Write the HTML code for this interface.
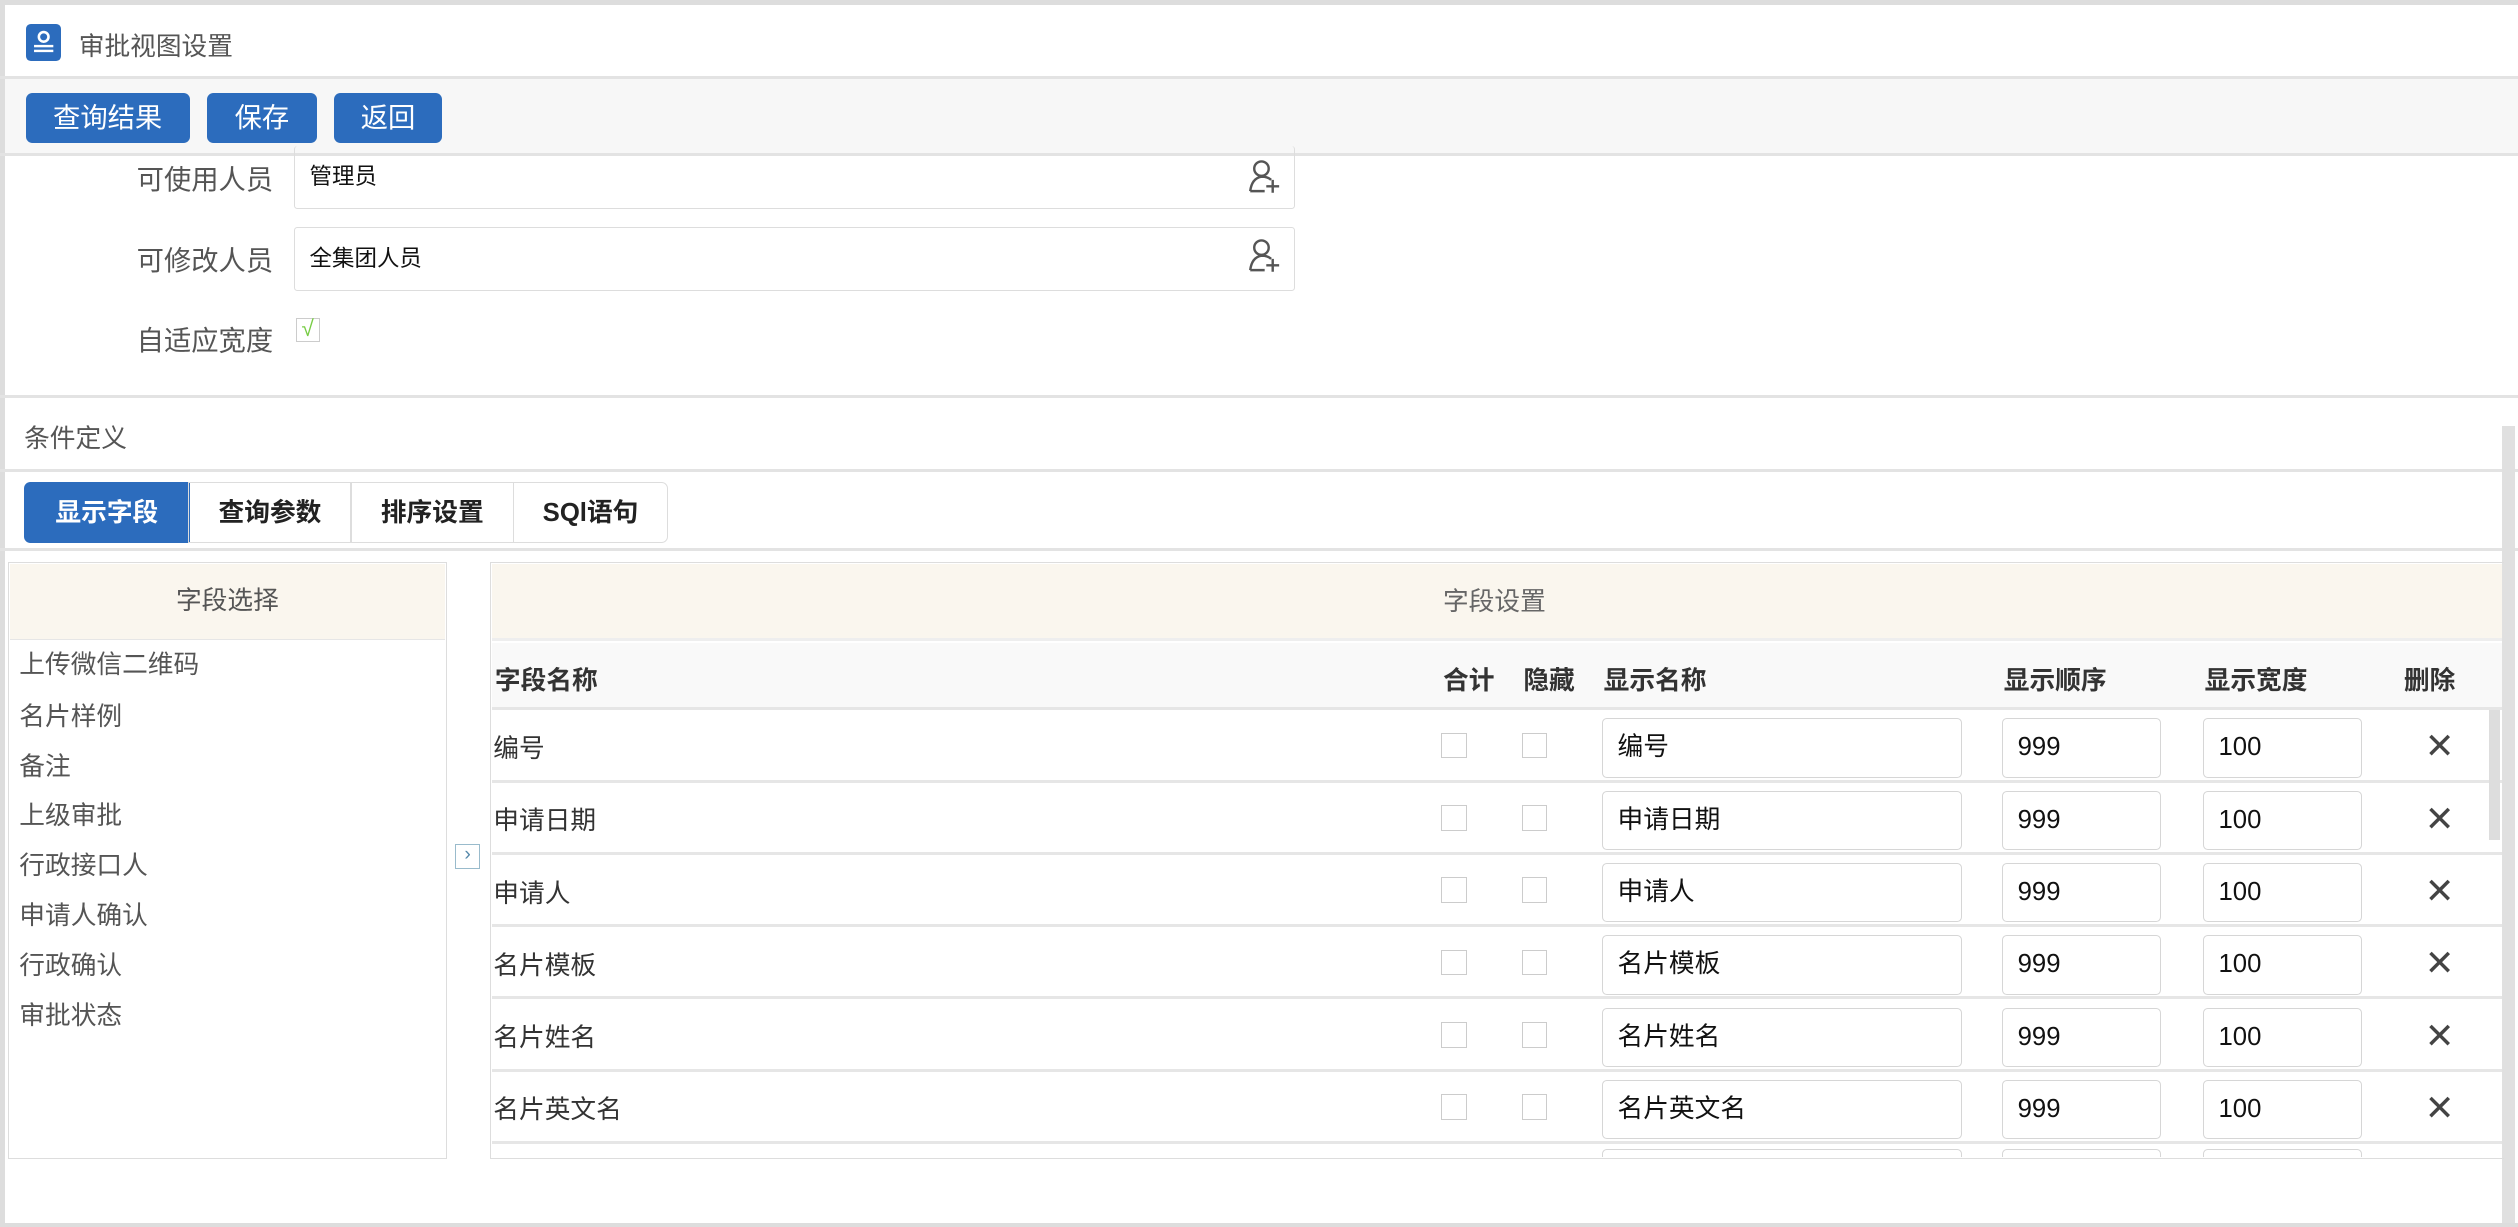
<!DOCTYPE html>
<html><head><meta charset="utf-8"><style>
*{box-sizing:border-box;margin:0;padding:0}
html,body{width:2518px;height:1227px;overflow:hidden;background:#fff}
#w{position:relative;width:1567px;height:764px;zoom:1.60689;font-family:"Liberation Sans","Noto Sans CJK SC",sans-serif;color:#333}
.a{position:absolute}
.hl{position:absolute;left:0;right:0;height:2px;background:#e3e3e3}
.btn{position:absolute;top:58px;height:31px;background:#2c6cbd;color:#fff;border-radius:4px;font-size:17px;line-height:31px;text-align:center}
.lbl{position:absolute;width:170px;text-align:right;font-size:17px;color:#555}
.inp{position:absolute;left:183px;width:623px;height:40px;border:1px solid #ddd;border-radius:2px;font-size:14px;color:#111;padding-left:9px;line-height:38px}
.tab{position:absolute;top:300px;height:38px;border:1px solid #ddd;font-size:16px;font-weight:bold;line-height:38px;text-align:center;color:#222}
.li{position:absolute;left:12px;font-size:16px;color:#555}
.th{position:absolute;top:411px;font-size:16px;font-weight:bold;color:#333}
.row{position:absolute;left:306px;width:1251px;height:45px;border-bottom:2px solid #e6e6e6}
.row .n{position:absolute;left:1px;top:11px;font-size:16px;color:#333}
.cb{position:absolute;top:14px;width:16px;height:16px;border:1px solid #ccc}
.ti{position:absolute;top:5px;height:37px;border:1px solid #d6d6d6;border-radius:3px;font-size:16px;color:#111;padding-left:9px;line-height:35px}
.x{position:absolute;left:1203px;top:10px;font-size:22px;color:#444}
</style></head><body><div id="w">
<div class="a" style="left:0;top:0;width:1567px;height:3px;background:#ddd"></div>
<div class="a" style="left:0;top:0;width:3px;height:764px;background:#ddd"></div>
<div class="a" style="left:0;top:761px;width:1567px;height:3px;background:#ddd"></div>
<div class="a" style="left:16px;top:15px;width:22px;height:23px;background:#2c6cbd;border-radius:3px"><svg width="22" height="23"><circle cx="11" cy="8" r="3" fill="none" stroke="#fff" stroke-width="1.6"/><rect x="5" y="13" width="12" height="1.5" fill="#fff"/><rect x="5" y="16" width="12" height="1.5" fill="#fff"/></svg></div>
<div class="a" style="left:49px;top:16px;font-size:16px;color:#555">审批视图设置</div>
<div class="hl" style="top:47px"></div>
<div class="a" style="left:3px;top:49px;width:1564px;height:47px;background:#f7f7f7"></div>
<div class="btn" style="left:16px;width:102px">查询结果</div>
<div class="btn" style="left:129px;width:68px">保存</div>
<div class="btn" style="left:208px;width:67px">返回</div>
<div class="hl" style="top:95px"></div>
<div class="lbl" style="top:98px">可使用人员</div>
<div class="inp" style="top:91px;border-top:none;height:39px;line-height:38px">管理员</div>
<div class="lbl" style="top:148px">可修改人员</div>
<div class="inp" style="top:141px">全集团人员</div>
<svg class="a" style="left:776px;top:99px" width="22" height="24"><circle cx="9" cy="6" r="4.5" fill="none" stroke="#555" stroke-width="1.5"/><path d="M2 20 Q3 12 9 11 Q13 11 15 13 M2 20 H11 M16 13 V21 M12 17 H20" fill="none" stroke="#555" stroke-width="1.5"/></svg>
<svg class="a" style="left:776px;top:148px" width="22" height="24"><circle cx="9" cy="6" r="4.5" fill="none" stroke="#555" stroke-width="1.5"/><path d="M2 20 Q3 12 9 11 Q13 11 15 13 M2 20 H11 M16 13 V21 M12 17 H20" fill="none" stroke="#555" stroke-width="1.5"/></svg>
<div class="lbl" style="top:198px">自适应宽度</div>
<div class="a" style="left:184px;top:198px;width:15px;height:15px;border:1px solid #ccc;color:#7c4;font-size:14px;line-height:13px;text-align:center">√</div>
<div class="hl" style="top:246px"></div>
<div class="a" style="left:15px;top:260px;font-size:16px;color:#555">条件定义</div>
<div class="hl" style="top:292px"></div>
<div class="tab" style="left:15px;width:103px;background:#2c6cbd;color:#fff;border-color:#2c6cbd;border-radius:4px 0 0 4px">显示字段</div>
<div class="tab" style="left:117px;width:102px">查询参数</div>
<div class="tab" style="left:218px;width:102px">排序设置</div>
<div class="tab" style="left:319px;width:97px;border-radius:0 4px 4px 0">SQl语句</div>
<div class="hl" style="top:341px"></div>
<div class="a" style="left:1557px;top:265px;width:8px;height:496px;background:#e0e0e0"></div>
<div class="a" style="left:5px;top:350px;width:273px;height:371px;border:1px solid #ddd"></div>
<div class="a" style="left:6px;top:351px;width:271px;height:47px;background:#faf6ee;border-bottom:1px solid #e6e6e6;text-align:center;line-height:47px;font-size:16px;color:#555">字段选择</div>
<div class="li" style="top:401px">上传微信二维码</div>
<div class="li" style="top:433px">名片样例</div>
<div class="li" style="top:464px">备注</div>
<div class="li" style="top:495px">上级审批</div>
<div class="li" style="top:526px">行政接口人</div>
<div class="li" style="top:557px">申请人确认</div>
<div class="li" style="top:588px">行政确认</div>
<div class="li" style="top:619px">审批状态</div>
<div class="a" style="left:283px;top:525px;width:16px;height:16px;border:1px solid #9bc;color:#58a;font-size:12px;line-height:13px;text-align:center">›</div>
<div class="a" style="left:305px;top:350px;width:1253px;height:371px;border:1px solid #ddd;border-right:none"></div>
<div class="a" style="left:306px;top:351px;width:1251px;height:48px;background:#faf6ee;border-bottom:2px solid #eee;line-height:48px;font-size:16px;color:#666"><span style="position:absolute;left:592px">字段设置</span></div>
<div class="a" style="left:306px;top:400px;width:1251px;height:42px;background:#f9f9f9;border-bottom:2px solid #e6e6e6"></div>
<div class="th" style="left:308px">字段名称</div>
<div class="th" style="left:898px">合计</div>
<div class="th" style="left:948px">隐藏</div>
<div class="th" style="left:998px">显示名称</div>
<div class="th" style="left:1247px">显示顺序</div>
<div class="th" style="left:1372px">显示宽度</div>
<div class="th" style="left:1496px">删除</div>
<div class="row" style="top:442px"><div class="n">编号</div><div class="cb" style="left:591px"></div><div class="cb" style="left:641px"></div><div class="ti" style="left:691px;width:224px">编号</div><div class="ti" style="left:940px;width:99px">999</div><div class="ti" style="left:1065px;width:99px">100</div><div class="x">✕</div></div>
<div class="row" style="top:487px"><div class="n">申请日期</div><div class="cb" style="left:591px"></div><div class="cb" style="left:641px"></div><div class="ti" style="left:691px;width:224px">申请日期</div><div class="ti" style="left:940px;width:99px">999</div><div class="ti" style="left:1065px;width:99px">100</div><div class="x">✕</div></div>
<div class="row" style="top:532px"><div class="n">申请人</div><div class="cb" style="left:591px"></div><div class="cb" style="left:641px"></div><div class="ti" style="left:691px;width:224px">申请人</div><div class="ti" style="left:940px;width:99px">999</div><div class="ti" style="left:1065px;width:99px">100</div><div class="x">✕</div></div>
<div class="row" style="top:577px"><div class="n">名片模板</div><div class="cb" style="left:591px"></div><div class="cb" style="left:641px"></div><div class="ti" style="left:691px;width:224px">名片模板</div><div class="ti" style="left:940px;width:99px">999</div><div class="ti" style="left:1065px;width:99px">100</div><div class="x">✕</div></div>
<div class="row" style="top:622px"><div class="n">名片姓名</div><div class="cb" style="left:591px"></div><div class="cb" style="left:641px"></div><div class="ti" style="left:691px;width:224px">名片姓名</div><div class="ti" style="left:940px;width:99px">999</div><div class="ti" style="left:1065px;width:99px">100</div><div class="x">✕</div></div>
<div class="row" style="top:667px"><div class="n">名片英文名</div><div class="cb" style="left:591px"></div><div class="cb" style="left:641px"></div><div class="ti" style="left:691px;width:224px">名片英文名</div><div class="ti" style="left:940px;width:99px">999</div><div class="ti" style="left:1065px;width:99px">100</div><div class="x">✕</div></div>
<div class="a" style="left:306px;top:712px;width:1251px;height:8px;overflow:hidden"><div class="ti" style="left:691px;top:3px;width:224px"></div><div class="ti" style="left:940px;top:3px;width:99px"></div><div class="ti" style="left:1065px;top:3px;width:99px"></div></div>
<div class="a" style="left:1549px;top:442px;width:7px;height:81px;background:#ddd"></div>
</div></body></html>
